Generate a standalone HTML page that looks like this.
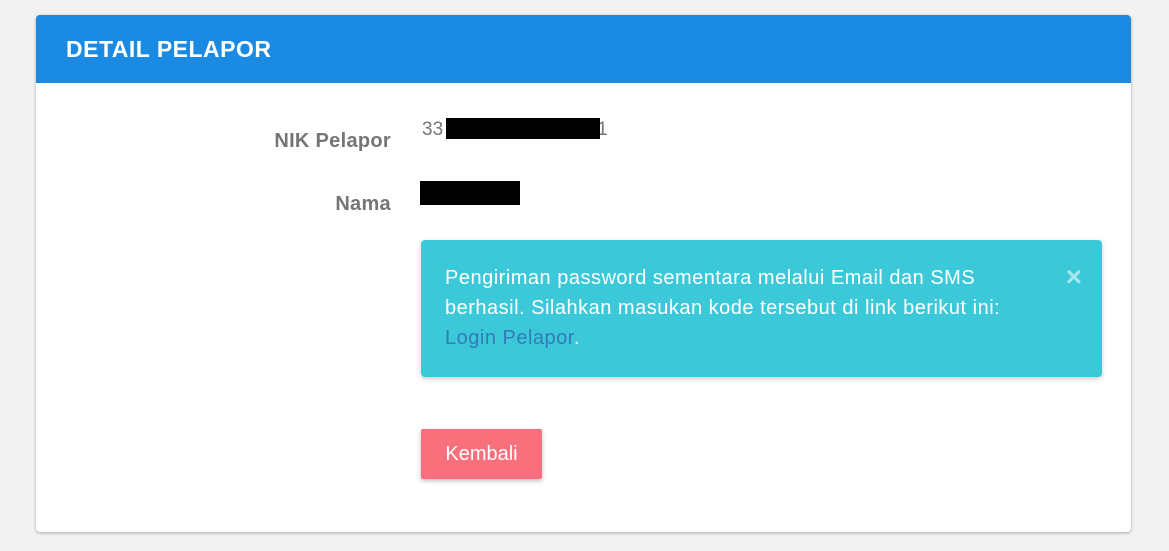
<!DOCTYPE html>
<html><head><style>
body{margin:0;background:#f2f2f2;width:1169px;height:551px;font-family:"Liberation Sans",Arial,sans-serif;position:relative;overflow:hidden}
.card{position:absolute;left:36px;top:15px;width:1095px;height:517px;background:#fff;border-radius:4px;box-shadow:0 1px 3px rgba(0,0,0,.3);overflow:hidden}
.hd{height:68px;background:#1a8ae3;color:#fff;font-weight:bold;font-size:23px;letter-spacing:0.5px;line-height:68px;padding-left:30px}
.lbl{position:absolute;right:740px;color:#757575;font-weight:bold;font-size:20px;letter-spacing:0.3px}
.val{position:absolute;color:#757575;font-size:19px}
.blk{position:absolute;background:#000}
.alert{position:absolute;left:385px;top:225px;width:681px;height:137px;background:#3bc9d9;border-radius:4px;box-shadow:0 2px 5px rgba(0,0,0,.2);color:#fff;font-size:20px;letter-spacing:0.5px;line-height:30px;box-sizing:border-box;padding:23px 0 0 24px}
.alert a{color:#337ab7;text-decoration:none}
.x{position:absolute;right:20px;top:22px;color:#a6e6ee;font-weight:bold;font-size:28px;letter-spacing:0}
.btn{position:absolute;left:385px;top:414px;width:121px;height:50px;background:#f7707c;border-radius:2px;box-shadow:0 2px 5px rgba(0,0,0,.25);color:#fff;font-size:20px;line-height:50px;text-align:center}
</style></head><body>
<div class="card">
<div class="hd">DETAIL PELAPOR</div>
<div class="lbl" style="top:115px">NIK Pelapor</div>
<div class="val" style="left:386px;top:104px">33<span style="display:inline-block;width:154px"></span>1</div>
<div class="blk" style="left:410px;top:103px;width:154px;height:21px"></div>
<div class="lbl" style="top:178px">Nama</div>
<div class="blk" style="left:384px;top:166px;width:100px;height:24px"></div>
<div class="alert">Pengiriman password sementara melalui Email dan SMS<br>berhasil. Silahkan masukan kode tersebut di link berikut ini:<br><a>Login Pelapor</a>.<span class="x">×</span></div>
<div class="btn">Kembali</div>
</div>
</body></html>
